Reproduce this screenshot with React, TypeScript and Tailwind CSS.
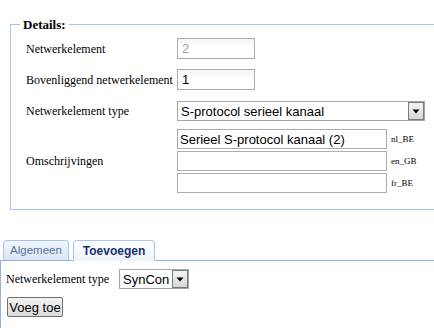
import React from 'react'

const serif = { fontFamily: '"Liberation Serif", "Times New Roman", serif' }

function TextBox({ value, width, height, muted }: { value: string; width: string; height: string; muted?: boolean }) {
  return (
    <div
      className={`${width} ${height} shrink-0 flex items-center border border-[#abadb3] bg-gradient-to-b from-[#f3f5f7] via-white to-white pl-[4px] font-['Liberation_Sans',Arial,sans-serif] text-[13px] leading-none ${muted ? 'text-[#a0a0a0]' : 'text-black'}`}
    >
      {value}
    </div>
  )
}

function SelectBox({ value, width }: { value: string; width: string }) {
  return (
    <div className={`${width} h-[20px] shrink-0 flex items-stretch border border-[#a5a5a5] bg-white font-['Liberation_Sans',Arial,sans-serif] text-[13px]`}>
      <div className="flex-1 flex items-center pl-[3px] leading-none whitespace-nowrap overflow-hidden">{value}</div>
      <div className="w-[16px] shrink-0 flex items-center justify-center border border-[#7a7a7a] bg-gradient-to-b from-[#f4f4f4] to-[#d6d6d6]">
        <svg width="8" height="5" viewBox="0 0 8 5">
          <path d="M0.5 0.5 H7.5 L4 4.5 Z" fill="#000" />
        </svg>
      </div>
    </div>
  )
}

export default function App() {
  return (
    <div className="w-[434px] h-[328px] overflow-hidden bg-white text-black" style={serif}>
      {/* Details */}
      <fieldset className="ml-[10px] mt-[16px] w-[440px] border border-[#a8c3f0] pl-[9px] pb-[16px]">
        <legend className="px-[3px] text-[13px] font-bold leading-[17px]">Details:</legend>
        <div className="pl-[6px] text-[12px]">
          <div className="mt-[5px] flex items-center">
            <span className="w-[151px] shrink-0 whitespace-nowrap">Netwerkelement</span>
            <TextBox value="2" width="w-[78px]" height="h-[21px]" muted />
          </div>
          <div className="mt-[10px] flex items-center">
            <span className="w-[151px] shrink-0 whitespace-nowrap">Bovenliggend netwerkelement</span>
            <TextBox value="1" width="w-[78px]" height="h-[21px]" />
          </div>
          <div className="mt-[11px] flex items-center">
            <span className="w-[151px] shrink-0 whitespace-nowrap">Netwerkelement type</span>
            <SelectBox value="S-protocol serieel kanaal" width="w-[248px]" />
          </div>
          <div className="mt-[8px] flex items-center">
            <span className="w-[151px] shrink-0 whitespace-nowrap">Omschrijvingen</span>
            <div className="flex flex-col gap-[2px]">
              {[
                { value: 'Serieel S-protocol kanaal (2)', lang: 'nl_BE' },
                { value: '', lang: 'en_GB' },
                { value: '', lang: 'fr_BE' },
              ].map((row) => (
                <div key={row.lang} className="flex items-center">
                  <div className="w-[210px] h-[20px] shrink-0 flex items-center border border-[#abadb3] bg-white pl-[2px] font-['Liberation_Sans',Arial,sans-serif] text-[13px] leading-none">
                    {row.value}
                  </div>
                  <span className="ml-[4px] text-[9px] leading-none whitespace-nowrap">{row.lang}</span>
                </div>
              ))}
            </div>
          </div>
        </div>
      </fieldset>

      {/* Tabs */}
      <div className="mt-[30px] flex items-end pl-[3px] gap-[4px] font-['Liberation_Sans',Arial,sans-serif]">
        <div className="w-[66px] h-[20px] flex items-center justify-center rounded-t-[4px] border border-b-0 border-[#a9c4ec] bg-gradient-to-b from-[#f2f6fd] to-[#d9e6f8] text-[11.5px] text-[#5c6f96]">
          Algemeen
        </div>
        <div className="relative z-10 w-[82px] h-[21px] -mb-[1px] flex items-center justify-center rounded-t-[4px] border border-b-0 border-[#a9c4ec] bg-gradient-to-b from-white to-[#eef4fc] text-[12px] font-bold text-[#17336f]">
          Toevoegen
        </div>
      </div>
      <div className="border-t border-l border-[#8fb1e8] pl-[5px] pt-[8px] h-[80px]">
        <div className="flex items-center text-[12px]">
          <span className="w-[113px] shrink-0 whitespace-nowrap">Netwerkelement type</span>
          <SelectBox value="SynCon" width="w-[70px]" />
        </div>
        <button className="mt-[8px] ml-[1px] h-[20px] w-[56px] whitespace-nowrap rounded-[2px] border border-[#707070] bg-gradient-to-b from-[#f2f2f2] to-[#dcdcdc] font-['Liberation_Sans',Arial,sans-serif] text-[13px] leading-none">
          Voeg toe
        </button>
      </div>
    </div>
  )
}
